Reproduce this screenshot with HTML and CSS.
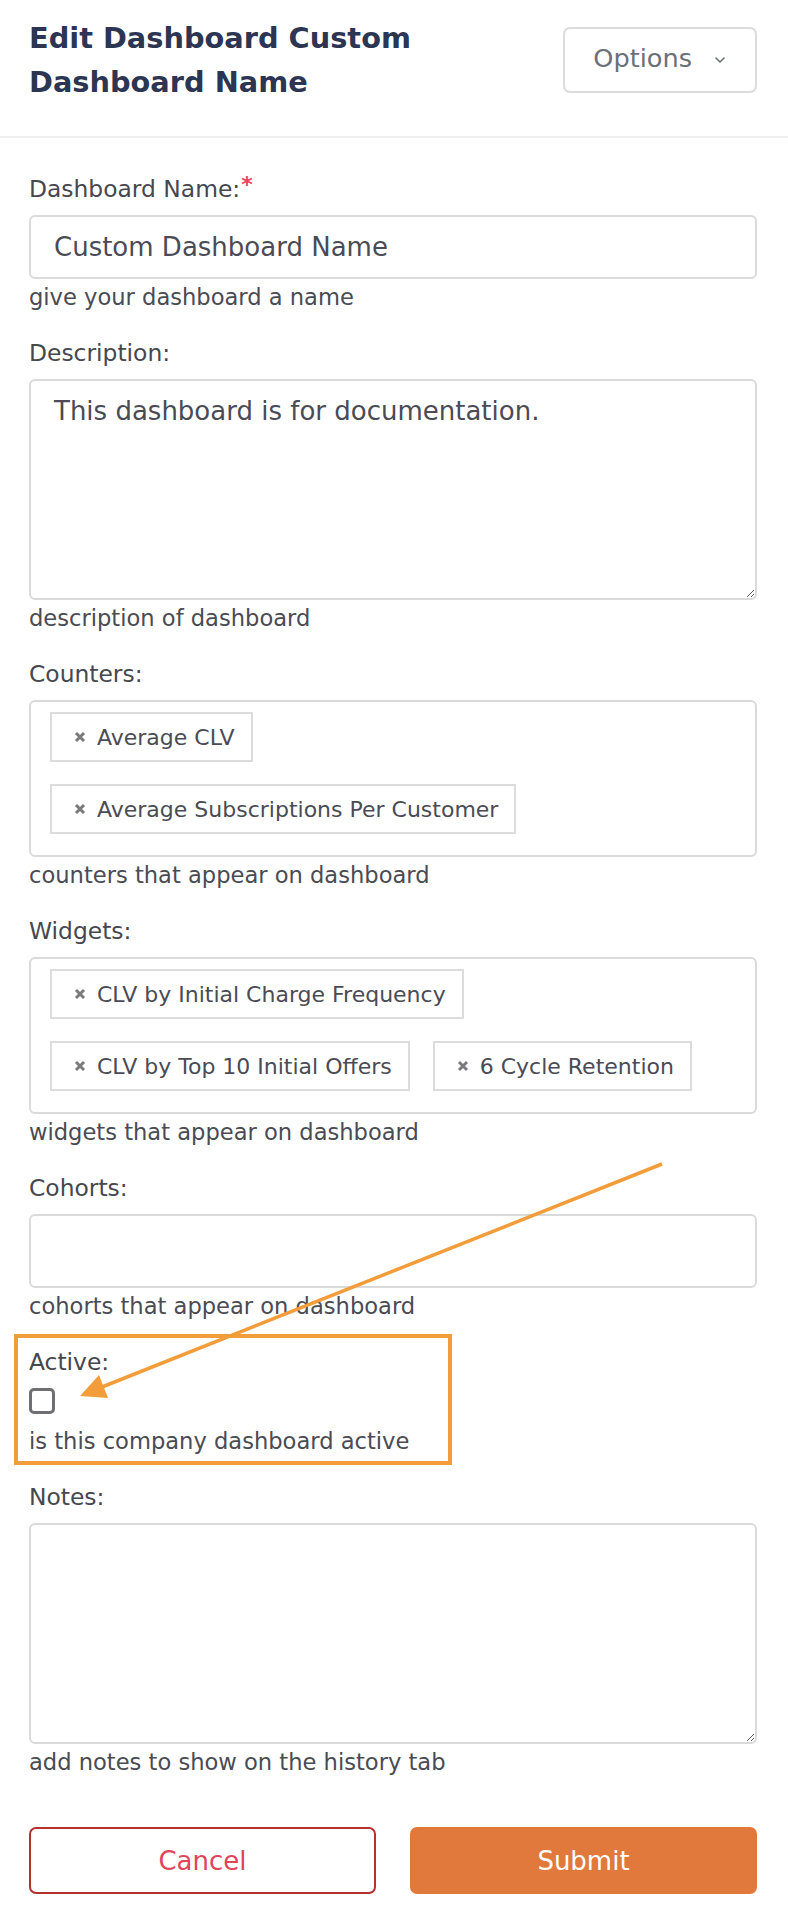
FILE: index.html
```html
<!DOCTYPE html>
<html lang="en">
<head>
<meta charset="utf-8">
<title>Edit Dashboard</title>
<link rel="stylesheet" href="styles.css">
</head>
<body>
<div class="page">
  <header class="header">
    <h1 class="title">Edit Dashboard Custom Dashboard Name</h1>
    <button class="options" type="button">
      <span>Options</span>
      <svg class="chev" width="10" height="6" viewBox="0 0 10 6"><polyline points="1,1 5,5 9,1" fill="none" stroke="#6b7079" stroke-width="1.6" stroke-linecap="round" stroke-linejoin="round"/></svg>
    </button>
  </header>

  <form class="form">
    <div class="field">
      <label class="label">Dashboard Name:<span class="req">*</span></label>
      <input class="input" type="text" value="Custom Dashboard Name">
      <div class="help">give your dashboard a name</div>
    </div>

    <div class="field">
      <label class="label">Description:</label>
      <textarea class="textarea">This dashboard is for documentation.</textarea>
      <div class="help">description of dashboard</div>
    </div>

    <div class="field">
      <label class="label">Counters:</label>
      <div class="tagbox">
        <span class="tag"><svg class="x" width="12" height="12" viewBox="0 0 12 12"><path d="M2 2L10 10M10 2L2 10" stroke="#7a7a7f" stroke-width="3"/></svg>Average CLV</span>
        <span class="tag"><svg class="x" width="12" height="12" viewBox="0 0 12 12"><path d="M2 2L10 10M10 2L2 10" stroke="#7a7a7f" stroke-width="3"/></svg>Average Subscriptions Per Customer</span>
      </div>
      <div class="help">counters that appear on dashboard</div>
    </div>

    <div class="field">
      <label class="label">Widgets:</label>
      <div class="tagbox">
        <span class="tag"><svg class="x" width="12" height="12" viewBox="0 0 12 12"><path d="M2 2L10 10M10 2L2 10" stroke="#7a7a7f" stroke-width="3"/></svg>CLV by Initial Charge Frequency</span>
        <span class="tag"><svg class="x" width="12" height="12" viewBox="0 0 12 12"><path d="M2 2L10 10M10 2L2 10" stroke="#7a7a7f" stroke-width="3"/></svg>CLV by Top 10 Initial Offers</span>
        <span class="tag"><svg class="x" width="12" height="12" viewBox="0 0 12 12"><path d="M2 2L10 10M10 2L2 10" stroke="#7a7a7f" stroke-width="3"/></svg>6 Cycle Retention</span>
      </div>
      <div class="help">widgets that appear on dashboard</div>
    </div>

    <div class="field">
      <label class="label">Cohorts:</label>
      <div class="selectbox"></div>
      <div class="help">cohorts that appear on dashboard</div>
    </div>

    <div class="field field-active">
      <label class="label">Active:</label>
      <input class="check" type="checkbox">
      <div class="help help-check">is this company dashboard active</div>
    </div>

    <div class="field">
      <label class="label">Notes:</label>
      <textarea class="textarea"></textarea>
      <div class="help">add notes to show on the history tab</div>
    </div>

    <div class="actions">
      <button class="btn btn-cancel" type="button">Cancel</button>
      <button class="btn btn-submit" type="button">Submit</button>
    </div>
  </form>

  <svg class="arrow" width="788" height="1922" viewBox="0 0 788 1922">
    <line x1="662" y1="1164" x2="102" y2="1387" stroke="#f39c3a" stroke-width="3.5"/>
    <polygon points="80,1396 99,1375 108,1398" fill="#f39c3a"/>
  </svg>
</div>
</body>
</html>
```

FILE: styles.css
```css
html, body {
  margin: 0;
  padding: 0;
  background: #ffffff;
}

body {
  font-family: "DejaVu Sans", "Liberation Sans", sans-serif;
  color: #46474f;
}

.page {
  position: relative;
  width: 788px;
  min-height: 1922px;
}

.header {
  display: flex;
  justify-content: space-between;
  align-items: flex-start;
  gap: 24px;
  padding: 16px 31px 32px 29px;
  border-bottom: 2px solid #efefef;
}

.title {
  margin: 0;
  font-size: 28.8px;
  line-height: 44px;
  font-weight: bold;
  color: #2c3552;
  flex: 1 1 auto;
}

.options {
  flex: none;
  margin-top: 11px;
  height: 66px;
  box-sizing: border-box;
  display: flex;
  align-items: center;
  gap: 23px;
  padding: 0 30px 4px 28px;
  background: #ffffff;
  border: 2px solid #dcdcdc;
  border-radius: 7px;
  font-family: "DejaVu Sans", "Liberation Sans", sans-serif;
  font-size: 25.6px;
  color: #6b7079;
}

.chev {
  margin-top: 4px;
}

.form {
  padding: 35px 31px 0 29px;
}

.field + .field {
  margin-top: 24px;
}

.label {
  display: block;
  font-size: 23.4px;
  line-height: 32px;
  margin-bottom: 10px;
  color: #46474f;
}

.req {
  color: #e8485c;
  font-size: 22px;
  font-weight: bold;
  vertical-align: top;
  line-height: 24px;
  margin-left: 1px;
}

.input {
  display: block;
  width: 100%;
  height: 64px;
  box-sizing: border-box;
  margin: 0;
  padding: 0 23px;
  border: 2px solid #dadada;
  border-radius: 6px;
  font-family: "DejaVu Sans", "Liberation Sans", sans-serif;
  font-size: 26px;
  color: #4a4b55;
  background: #ffffff;
  outline: none;
}

.textarea {
  display: block;
  width: 100%;
  height: 221px;
  box-sizing: border-box;
  margin: 0;
  padding: 13px 23px;
  border: 2px solid #dadada;
  border-radius: 6px;
  font-family: "DejaVu Sans", "Liberation Sans", sans-serif;
  font-size: 26px;
  line-height: 34px;
  color: #4a4b55;
  background: #ffffff;
  outline: none;
}

.help {
  margin-top: 2px;
  font-size: 22.6px;
  line-height: 32px;
  color: #4a4b53;
}

.tagbox {
  display: flex;
  flex-wrap: wrap;
  align-items: flex-start;
  gap: 22px 23px;
  padding: 10px 30px 21px 19px;
  border: 2px solid #dadada;
  border-radius: 6px;
}

.tag {
  display: flex;
  align-items: center;
  height: 50px;
  box-sizing: border-box;
  padding: 0 16px 0 22px;
  border: 2px solid #dcdcdc;
  font-size: 22px;
  color: #4a4b55;
  white-space: nowrap;
}

.x {
  flex: none;
  margin-right: 11px;
}

.selectbox {
  height: 74px;
  box-sizing: border-box;
  border: 2px solid #dadada;
  border-radius: 6px;
}

.field-active {
  position: relative;
}

.field-active::before {
  content: "";
  position: absolute;
  left: -15px;
  top: -12px;
  width: 438px;
  height: 131px;
  box-sizing: border-box;
  border: 4px solid #f39c3a;
  pointer-events: none;
}

.check {
  -webkit-appearance: none;
  appearance: none;
  display: block;
  width: 26px;
  height: 26px;
  box-sizing: border-box;
  margin: 0;
  border: 3px solid #6f6f73;
  border-radius: 5px;
  background: #ffffff;
}

.help-check {
  margin-top: 11px;
}

.actions {
  display: grid;
  grid-template-columns: 1fr 1fr;
  gap: 34px;
  margin-top: 49px;
}

.btn {
  height: 67px;
  box-sizing: border-box;
  border-radius: 7px;
  font-family: "DejaVu Sans", "Liberation Sans", sans-serif;
  font-size: 26px;
  padding: 0;
}

.btn-cancel {
  background: #ffffff;
  border: 2.5px solid #b5302f;
  color: #e0455c;
}

.btn-submit {
  background: #e0793b;
  border: none;
  color: #ffffff;
}

.arrow {
  position: absolute;
  left: 0;
  top: 0;
  pointer-events: none;
}
```
